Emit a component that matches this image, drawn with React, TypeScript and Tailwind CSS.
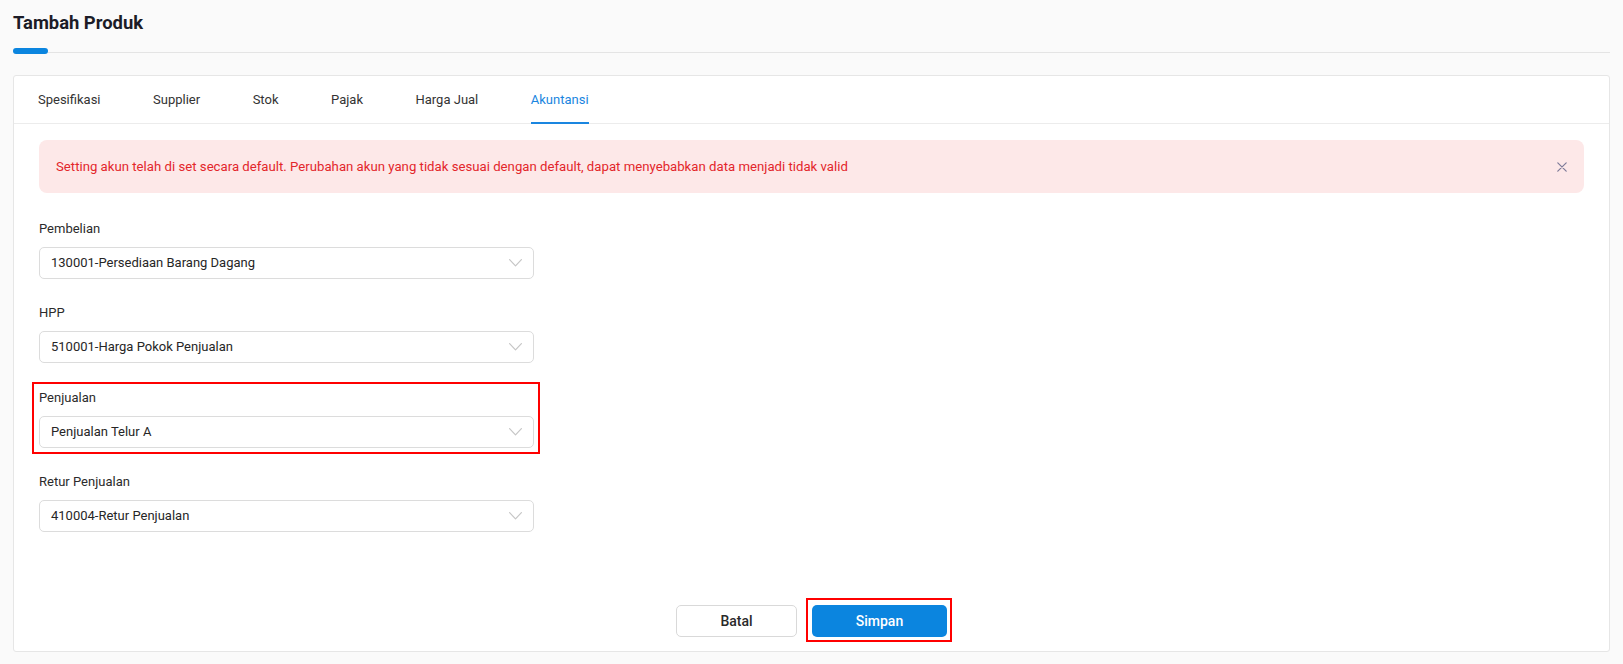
import React from "react";

const tabs = ["Spesifikasi", "Supplier", "Stok", "Pajak", "Harga Jual", "Akuntansi"];

const fields = [
  { label: "Pembelian", value: "130001-Persediaan Barang Dagang", marked: false },
  { label: "HPP", value: "510001-Harga Pokok Penjualan", marked: false },
  { label: "Penjualan", value: "Penjualan Telur A", marked: true },
  { label: "Retur Penjualan", value: "410004-Retur Penjualan", marked: false },
];

function Chevron() {
  return (
    <svg width="13" height="8" viewBox="0 0 13 8" fill="none" className="shrink-0">
      <path d="M0.6 0.6 L6.5 6.8 L12.4 0.6" stroke="#c6c6c6" strokeWidth="1.2" strokeLinecap="round" strokeLinejoin="round" />
    </svg>
  );
}

function CloseIcon() {
  return (
    <svg width="10" height="10" viewBox="0 0 10 10" fill="none" className="shrink-0">
      <path d="M0.8 0.8 L9.2 9.2 M9.2 0.8 L0.8 9.2" stroke="#7d7a98" strokeWidth="1.2" strokeLinecap="round" />
    </svg>
  );
}

function Field({ label, value, marked }: { label: string; value: string; marked: boolean }) {
  return (
    <div className="relative flex w-[495px] flex-col">
      {marked && (
        <div className="pointer-events-none absolute -top-[6px] -bottom-[6px] -left-[7px] -right-[6px] border-2 border-[#ff0000]" />
      )}
      <div className="h-[20px] text-[13px] leading-[20px] text-[#2b2b2b]">{label}</div>
      <div className="mt-[8px] flex h-[32px] items-center justify-between rounded-[5px] border border-[#dcdcdc] bg-white pl-[11px] pr-[11px]">
        <span className="text-[13px] leading-[20px] text-[#262626]">{value}</span>
        <Chevron />
      </div>
    </div>
  );
}

export default function App() {
  return (
    <div className="min-h-[664px] bg-[#fafafa] px-[13px] pt-[11px] pb-[12px] font-['Roboto',sans-serif]">
      <h1 className="text-[18.4px] font-bold leading-[24px] text-[#1c1c27]">Tambah Produk</h1>
      <div className="mt-[13px] flex items-end">
        <div className="h-[6px] w-[35px] rounded-full bg-[#0b85df]" />
        <div className="mb-[1px] h-px flex-1 bg-[#e4e4e4]" />
      </div>

      <div className="mt-[21px] rounded-[3px] border border-[#e6e6e6] bg-white">
        <div className="flex gap-[52.5px] border-b border-[#ececec] pl-[24px]">
          {tabs.map((t) => {
            const active = t === "Akuntansi";
            return (
              <div
                key={t}
                className={
                  active
                    ? "-mb-px border-b-2 border-[#1a86e0] pt-[14px] pb-[12px] text-[13px] leading-[20px] text-[#1a86e0]"
                    : "-mb-px border-b-2 border-transparent pt-[14px] pb-[12px] text-[13px] leading-[20px] text-[#333333]"
                }
              >
                {t}
              </div>
            );
          })}
        </div>

        <div className="flex flex-col px-[25px] pt-[16px] pb-[14px]">
          <div className="flex h-[53px] items-center justify-between rounded-[8px] bg-[#fde8e8] pl-[17px] pr-[17px]">
            <span className="text-[13.2px] leading-[20px] text-[#e3262b]">
              Setting akun telah di set secara default. Perubahan akun yang tidak sesuai dengan default, dapat menyebabkan data menjadi tidak valid
            </span>
            <CloseIcon />
          </div>

          <div className="mt-[25.5px] flex flex-col gap-[24.5px]">
            {fields.map((f) => (
              <Field key={f.label} {...f} />
            ))}
          </div>

          <div className="mt-[73px] flex justify-center gap-[15px]">
            <button className="h-[32px] w-[121px] rounded-[5px] border border-[#d9d9d9] bg-white text-[14px] font-medium text-[#2a2a2a]">
              Batal
            </button>
            <div className="relative">
              <div className="pointer-events-none absolute -top-[7px] -bottom-[5px] -left-[6px] -right-[5px] border-2 border-[#ff0000]" />
              <button className="h-[32px] w-[135px] rounded-[5px] bg-[#0b85df] text-[14px] font-medium text-white">
                Simpan
              </button>
            </div>
          </div>
        </div>
      </div>
    </div>
  );
}
